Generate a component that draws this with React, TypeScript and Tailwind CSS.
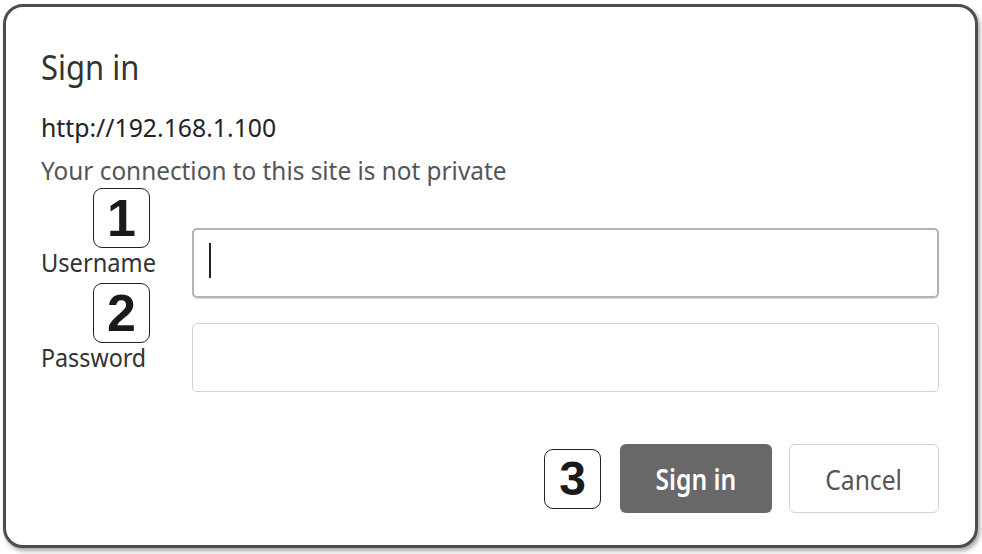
import React from "react";

const Badge = ({ n, className = "" }: { n: string; className?: string }) => (
  <div
    className={`flex items-center justify-center w-[57px] h-[60px] border-[1.5px] border-[#222] rounded-[9px] bg-white text-[#1a1a1a] font-bold leading-none ${className}`}
    style={{ fontFamily: '"Liberation Sans", Arial, sans-serif' }}
  >
    {n}
  </div>
);

export default function App() {
  return (
    <div
      className="w-[982px] h-[554px] bg-white pl-[3px] pt-[4px] overflow-hidden"
      style={{ fontFamily: '"Noto Sans", "Open Sans", sans-serif' }}
    >
      <div className="w-[975px] h-[544px] border-[3px] border-[#4d4d4d] rounded-[20px] shadow-[2px_3px_4px_rgba(0,0,0,0.35)] bg-white flex flex-col pl-[35px] pr-[36px] pt-[40px]">
        <div className="h-[40px] text-[34px] leading-[40px] text-[#333]">
          <span className="inline-block origin-left scale-x-[0.91]">Sign in</span>
        </div>
        <div className="mt-[24px] h-[32px] text-[26px] leading-[32px] text-[#222]">
          <span className="inline-block origin-left scale-x-[0.953] whitespace-nowrap">http://192.168.1.100</span>
        </div>
        <div className="mt-[11px] h-[32px] text-[26px] leading-[32px] text-[#555]">
          <span className="inline-block origin-left scale-x-[0.936] whitespace-nowrap">Your connection to this site is not private</span>
        </div>

        <div className="mt-[2px] flex h-[95px]">
          <div className="w-[151px] flex flex-col">
            <Badge n="1" className="ml-[52px] text-[52px]" />
            <div className="-mt-[1px] h-[30px] text-[25px] leading-[30px] text-[#333]">
              <span className="inline-block origin-left scale-x-[0.946]">Username</span>
            </div>
          </div>
          <div className="flex-1 mt-[40px] h-[70px] border-2 border-[#b3b3b3] rounded-[5px] shadow-[0_1px_1px_rgba(0,0,0,0.15)] pl-[15px] pt-[13px]">
            <div className="w-[2px] h-[35px] bg-[#222]" />
          </div>
        </div>

        <div className="flex h-[109px]">
          <div className="w-[151px] flex flex-col">
            <Badge n="2" className="ml-[52px] text-[52px]" />
            <div className="-mt-[1px] h-[30px] text-[25px] leading-[30px] text-[#333]">
              <span className="inline-block origin-left scale-x-[0.93]">Password</span>
            </div>
          </div>
          <div className="flex-1 mt-[40px] h-[69px] border-[1.5px] border-[#d2d2d2] rounded-[5px]" />
        </div>

        <div className="mt-[52px] flex justify-end items-center">
          <Badge n="3" className="h-[59px] text-[48px]" />
          <div className="ml-[19px] w-[152px] h-[69px] rounded-[6px] bg-[#686868] flex items-center justify-center text-white font-semibold text-[28px]">
            <span className="inline-block scale-x-[0.88]">Sign in</span>
          </div>
          <div className="ml-[17px] w-[150px] h-[69px] rounded-[6px] border-[1.5px] border-[#d4d4d4] bg-white flex items-center justify-center text-[#555] text-[28px]">
            <span className="inline-block scale-x-[0.88]">Cancel</span>
          </div>
        </div>
      </div>
    </div>
  );
}
